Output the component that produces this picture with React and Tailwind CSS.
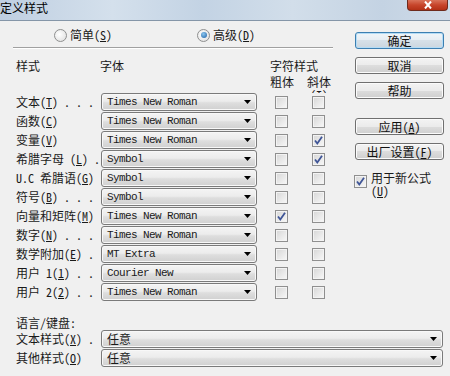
import React from "react";

const FONT = "[font-family:'Noto_Sans_Mono_CJK_SC','Noto_Sans_CJK_SC',sans-serif]";

function Check({ checked }) {
  return (
    <div className="w-[13px] h-[13px] border border-[#8f8f8f] bg-[linear-gradient(135deg,#d6d6d6,#f8f8f8)] shadow-[inset_0_0_0_1px_#f3f3f3] flex items-center justify-center shrink-0">
      {checked && (
        <svg width="11" height="11" viewBox="0 0 11 11">
          <path d="M2 5.5 L4.3 8.5 L9 1.8" fill="none" stroke="#3f5597" strokeWidth="1.8" />
        </svg>
      )}
    </div>
  );
}

function Radio({ on }) {
  return (
    <div className="w-[13px] h-[13px] rounded-full border border-[#8e8f8f] bg-[radial-gradient(circle_at_40%_40%,#ffffff,#dcdcdc)] flex items-center justify-center shrink-0">
      {on && <div className="w-[6px] h-[6px] rounded-full bg-[radial-gradient(circle_at_40%_35%,#8cc6ee,#1b5fa6)]" />}
    </div>
  );
}

function Sel({ text, wide, cjk }) {
  return (
    <div
      className={
        (wide ? "w-[342px] " : "w-[156px] ") +
        "h-[18px] rounded-[3px] border border-[#7a7a7a] bg-[linear-gradient(#f4f4f4_0%,#ececec_45%,#dedede_55%,#d0d0d0_100%)] shadow-[inset_0_0_0_1px_#f8f8f8] flex items-center pl-[5px] pr-[5px] shrink-0"
      }
    >
      <span
        className={
          "flex-1 whitespace-pre text-[#1a1a1a] " +
          (cjk ? "text-[12px] leading-[14px]" : "[font-family:'Liberation_Mono',monospace] text-[11px] tracking-[-0.6px] leading-[14px]")
        }
      >
        {text}
      </span>
      <svg width="7" height="4" viewBox="0 0 7 4">
        <path d="M0 0 H7 L3.5 4 Z" fill="#000" />
      </svg>
    </div>
  );
}

function Btn({ children, def, mt }) {
  return (
    <div
      className={
        "h-[17px] w-[89px] rounded-[3px] border flex items-center justify-center text-[12px] leading-none text-[#111] " +
        (def
          ? "border-[#3c7fb1] bg-[linear-gradient(#f0f5f9_0%,#e6edf3_50%,#d6e0e8_50%,#cbd6df_100%)] shadow-[inset_0_0_0_1px_#b4dcf6] "
          : "border-[#707070] bg-[linear-gradient(#f3f3f3_0%,#ebebeb_50%,#dddddd_50%,#cfcfcf_100%)] shadow-[inset_0_0_0_1px_#fbfbfb] ") +
        (mt || "")
      }
    >
      {children}
    </div>
  );
}

const U = ({ c }) => <span className="underline underline-offset-[1px]">{c}</span>;

const rows = [
  { l: <>文本(<U c="T" />) . . .</>, f: "Times New Roman", b: false, i: false },
  { l: <>函数(<U c="C" />)</>, f: "Times New Roman", b: false, i: false },
  { l: <>变量(<U c="V" />)</>, f: "Times New Roman", b: false, i: true },
  { l: <>希腊字母 (<U c="L" />) .</>, f: "Symbol", b: false, i: true },
  { l: <>U.C 希腊语(<U c="G" />)</>, f: "Symbol", b: false, i: false },
  { l: <>符号(<U c="B" />) . . .</>, f: "Symbol", b: false, i: false },
  { l: <>向量和矩阵(<U c="M" />)</>, f: "Times New Roman", b: true, i: false },
  { l: <>数字(<U c="N" />) . . .</>, f: "Times New Roman", b: false, i: false },
  { l: <>数学附加(<U c="E" />) .</>, f: "MT Extra", b: false, i: false },
  { l: <>用户 1(<U c="1" />) . .</>, f: "Courier New", b: false, i: false },
  { l: <>用户 2(<U c="2" />) . .</>, f: "Times New Roman", b: false, i: false },
];

export default function App() {
  return (
    <div className={"w-[450px] h-[376px] overflow-hidden bg-[#f0f0f0] flex flex-col text-[12px] text-[#1a1a1a] " + FONT}>
      {/* title bar */}
      <div className="h-[21px] shrink-0 border-b border-[#8596a8] bg-[linear-gradient(90deg,#bfcfe1_0%,#d4e0ec_25%,#c3d3e4_45%,#d2deea_65%,#c4d3e3_85%,#cfdbe8_100%)] flex items-start justify-between">
        <span className="text-[12px] leading-[15px] text-black">定义样式</span>
        <div className="mr-[2px] w-[41px] h-[11px] rounded-b-[4px] border border-t-0 border-[#6e2a1c] bg-[linear-gradient(#d9735a_0%,#c7452b_50%,#b33016_100%)] flex items-center justify-center">
          <svg width="10" height="8" viewBox="0 0 10 8">
            <path d="M2 0.5 L8 7.5 M8 0.5 L2 7.5" stroke="#fff" strokeWidth="2" />
          </svg>
        </div>
      </div>

      {/* body */}
      <div className="flex">
        {/* left part */}
        <div className="w-[355px] shrink-0 flex flex-col">
          {/* radio row */}
          <div className="h-[26px] flex items-center pt-[2px]">
            <div className="ml-[54px] flex items-center gap-[3px]">
              <Radio />
              <span className="leading-[14px]">简单(<U c="S" />)</span>
            </div>
            <div className="ml-[85px] flex items-center gap-[3px]">
              <Radio on />
              <span className="leading-[14px]">高级(<U c="D" />)</span>
            </div>
          </div>
          {/* group line */}
          <div className="ml-[13px] w-[320px] h-[2px] border-t border-[#a0a0a0] border-b border-b-white" />
          {/* header */}
          <div className="h-[44px] flex overflow-hidden pl-[16px]">
            <div className="w-[84px] pt-[10px] leading-[14px]">样式</div>
            <div className="w-[170px] pt-[10px] leading-[14px]">字体</div>
            <div className="flex flex-col pt-[10px]">
              <div className="leading-[14px]">字符样式</div>
              <div className="flex mt-[2px]">
                <div className="leading-[14px]">粗体</div>
                <div className="ml-[13px] flex flex-col">
                  <div className="leading-[14px]">斜体</div>
                  <div className="leading-[12px] pl-[3px]">(<U c="I" />)</div>
                </div>
              </div>
            </div>
          </div>
          {/* rows */}
          <div className="flex flex-col">
            {rows.map((r, k) => (
              <div key={k} className="h-[19px] flex items-start pl-[16px]">
                <div className="w-[85px] h-[18px] flex items-center whitespace-pre leading-[14px]">{r.l}</div>
                <Sel text={r.f} />
                <div className="h-[18px] flex items-center ml-[18px]">
                  <Check checked={r.b} />
                </div>
                <div className="h-[18px] flex items-center ml-[24px]">
                  <Check checked={r.i} />
                </div>
              </div>
            ))}
          </div>
        </div>

        {/* right column */}
        <div className="w-[89px] shrink-0 flex flex-col pt-[11px]">
          <Btn def>确定</Btn>
          <Btn mt="mt-[8px]">取消</Btn>
          <Btn mt="mt-[8px]">帮助</Btn>
          <Btn mt="mt-[19px]">应用(<U c="A" />)</Btn>
          <Btn mt="mt-[8px]">出厂设置(<U c="F" />)</Btn>
          <div className="mt-[15px] flex items-start gap-[4px] -ml-[1px]">
            <Check checked />
            <div className="flex flex-col -mt-[4px]">
              <span className="leading-[13px]">用于新公式</span>
              <span className="leading-[13px]">(<U c="U" />)</span>
            </div>
          </div>
        </div>
      </div>

      {/* bottom */}
      <div className="flex flex-col pl-[16px] mt-[14px]">
        <div className="leading-[14px]">语言/键盘:</div>
        <div className="h-[19px] flex items-start">
          <div className="w-[85px] h-[18px] flex items-center whitespace-pre leading-[14px]">文本样式(<U c="X" />) .</div>
          <Sel text="任意" wide cjk />
        </div>
        <div className="h-[19px] flex items-start">
          <div className="w-[85px] h-[18px] flex items-center whitespace-pre leading-[14px]">其他样式(<U c="O" />)</div>
          <Sel text="任意" wide cjk />
        </div>
      </div>
    </div>
  );
}
